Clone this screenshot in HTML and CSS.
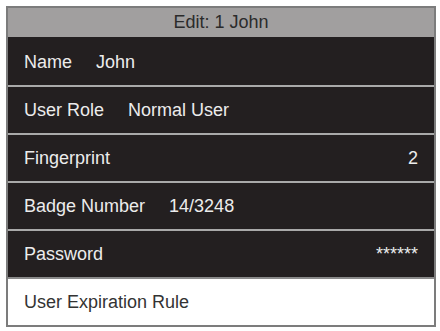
FILE: index.html
```html
<!DOCTYPE html>
<html lang="en">
<head>
  <meta charset="UTF-8">
  <meta name="viewport" content="width=device-width, initial-scale=1.0">
  <title>Edit: 1 John</title>
  <link rel="stylesheet" href="styles.css">
</head>
<body>
  <div class="frame">
    <!-- Title bar -->
    <div class="titlebar">Edit: 1 John</div>

    <!-- Menu rows -->
    <div class="row first">
      <span class="label">Name</span>
      <span class="value">John</span>
    </div>
    <div class="row">
      <span class="label">User Role</span>
      <span class="value">Normal User</span>
    </div>
    <div class="row">
      <span class="label">Fingerprint</span>
      <span class="value right">2</span>
    </div>
    <div class="row">
      <span class="label">Badge Number</span>
      <span class="value">14/3248</span>
    </div>
    <div class="row">
      <span class="label">Password</span>
      <span class="value right">******</span>
    </div>
    <div class="row selected">
      <span class="label">User Expiration Rule</span>
    </div>
  </div>
</body>
</html>
```

FILE: styles.css
```css
* {
  box-sizing: border-box;
}

body {
  background-color: #ffffff;
  font-family: 'Liberation Sans', Arial, sans-serif;
  margin: 0;
  padding: 6px 0 0 6px;
}

.frame {
  width: 430px;
  border: 2px solid #7c7c7c;
  background: #231f20;
  display: flex;
  flex-direction: column;
}

.titlebar {
  height: 29px;
  background-color: #a19f9f;
  color: #2b2b2b;
  font-size: 18px;
  display: flex;
  align-items: center;
  justify-content: center;
}

.row {
  height: 48px;
  border-top: 2px solid #a9a9a9;
  display: flex;
  align-items: center;
  gap: 24px;
  padding: 0 16px;
  color: #ececec;
  font-size: 18px;
  background-color: #231f20;
}

.row.first {
  border-top-color: #231f20;
}

.value.right {
  margin-left: auto;
}

.row.selected {
  background-color: #ffffff;
  color: #333333;
  border-top-color: #8a8a8a;
}
```
